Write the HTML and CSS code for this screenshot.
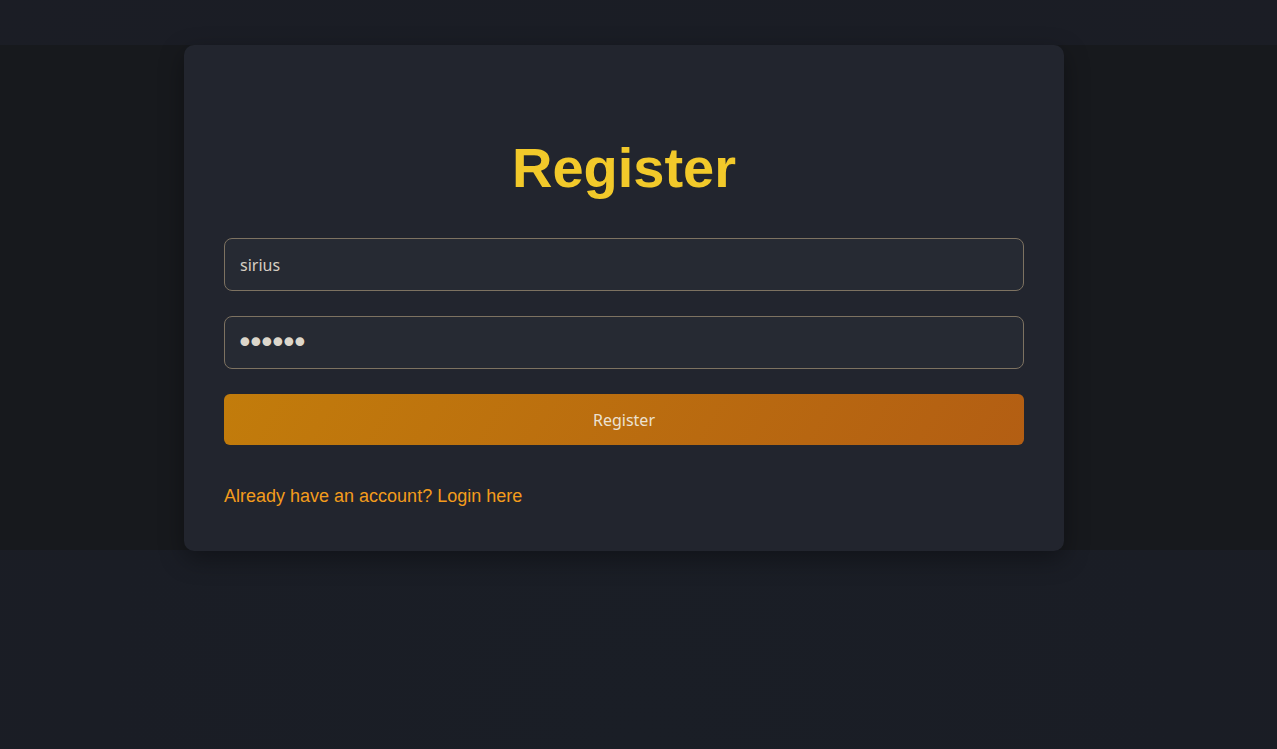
FILE: index.html
```html
<!DOCTYPE html>
<html lang="en">
<head>
<meta charset="utf-8">
<title>Register</title>
<link rel="stylesheet" href="styles.css">
</head>
<body>
<main class="band">
  <section class="card">
    <h1 class="title">Register</h1>
    <form class="form">
      <input class="field" type="text" value="sirius">
      <input class="field field-pass" type="password" value="secret">
      <button class="btn" type="button">Register</button>
    </form>
    <p class="alt"><a class="alt-link" href="#">Already have an account? Login here</a></p>
  </section>
</main>
</body>
</html>
```

FILE: styles.css
```css
html, body {
  margin: 0;
  padding: 0;
}
body {
  min-height: 749px;
  background: radial-gradient(ellipse at 50% 100%, #1a1e26 0%, #1a1d25 60%, #1b1d25 100%);
  font-family: "Liberation Sans", Arial, sans-serif;
  padding-top: 45px;
  box-sizing: border-box;
}
.band {
  background: #17191d;
  height: 505px;
  display: flex;
  justify-content: flex-start;
}
.card {
  margin-left: 184px;
  width: 880px;
  height: 506px;
  box-sizing: border-box;
  background: #22252e;
  border-radius: 10px;
  padding: 91px 40px 40px;
  box-shadow: 0 8px 24px rgba(0, 0, 0, 0.35);
}
.title {
  margin: 0;
  text-align: center;
  font-family: "Liberation Sans", Arial, sans-serif;
  font-weight: 700;
  font-size: 56px;
  line-height: 64px;
  color: #f2c92a;
}
.form {
  margin-top: 38px;
  display: flex;
  flex-direction: column;
  gap: 25px;
}
.field {
  height: 53px;
  box-sizing: border-box;
  padding: 0 15px;
  background: #262a33;
  border: 1px solid #7d7261;
  border-radius: 8px;
  color: #d6cfc3;
  font-family: "Noto Sans", sans-serif;
  font-size: 16px;
  outline: none;
}
.field-pass {
  font-family: "DejaVu Sans", sans-serif;
  font-size: 30px;
  letter-spacing: -6.7px;
  padding-left: 11px;
  color: #dcd6cb;
}
.btn {
  height: 51px;
  border: none;
  border-radius: 6px;
  background: linear-gradient(120deg, #c27c0b 0%, #b35e13 100%);
  color: #ece2d2;
  font-family: "Noto Sans", sans-serif;
  font-size: 16px;
  cursor: pointer;
}
.alt {
  margin: 41px 0 0;
  font-size: 18px;
  line-height: 21px;
}
.alt-link {
  color: #f39c1c;
  text-decoration: none;
}
```
